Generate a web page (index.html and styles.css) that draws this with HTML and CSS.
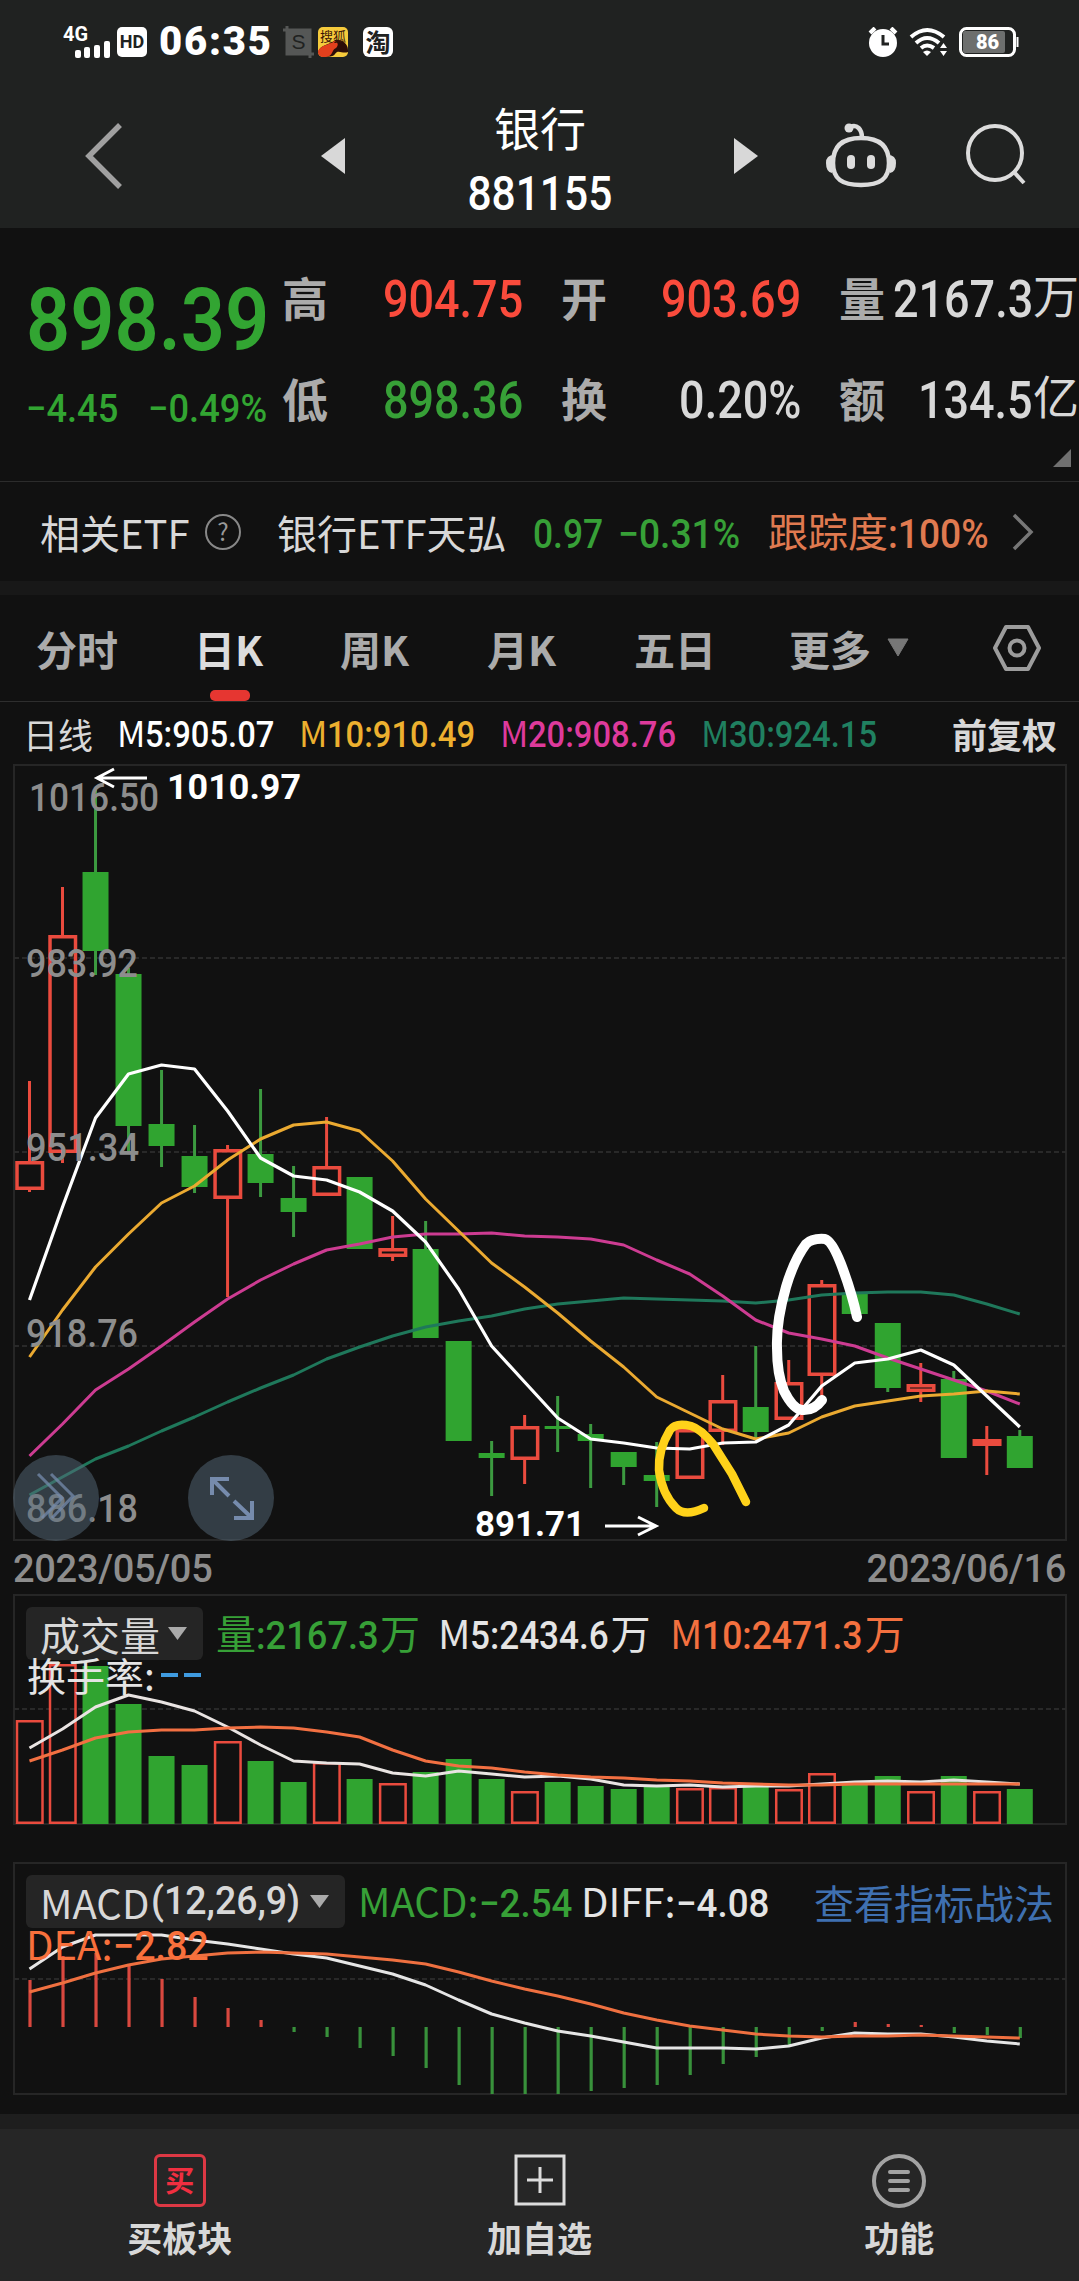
FILE: index.html
```html
<!DOCTYPE html>
<html lang="zh-CN">
<head>
  <meta charset="UTF-8" />
  <meta name="viewport" content="width=device-width, initial-scale=1.0"/>
  <title>银行 881155</title>
  <link rel="stylesheet" href="styles.css">
</head>
<body>
  <!-- Status bar -->
  <div class="status-bar">
    <svg class="signal" width="50" height="36" viewBox="0 0 50 36">
      <text x="0" y="17" class="signal-text" textLength="25" lengthAdjust="spacingAndGlyphs">4G</text>
      <g fill="#fff">
        <rect x="12" y="26" width="6" height="8" rx="2"/>
        <rect x="21" y="23" width="6" height="11" rx="2"/>
        <rect x="31" y="21" width="6" height="13" rx="2"/>
        <rect x="41" y="17" width="6" height="17" rx="2"/>
      </g>
    </svg>
    <span class="hd">HD</span>
    <span class="time">06:35</span>
    <svg class="crop-icon" width="31" height="32" viewBox="0 0 31 32">
      <path d="M4 0V28H31M0 4H27V32" fill="none" stroke="#555756" stroke-width="3"/>
      <rect x="4" y="4" width="23" height="23" fill="#555756"/>
      <text x="15.5" y="23" text-anchor="middle" class="crop-text">S</text>
    </svg>
    <svg class="sohu" width="30" height="30" viewBox="0 0 30 30">
      <rect width="30" height="30" rx="5" fill="#f6cb3c"/>
      <path d="M0 25C3 17 10 19 17 13C24 12 30 17 30 23V25C24 27 20 22 17 27C15 31 3 31 0 25Z" fill="#2c0d08"/>
      <path d="M0 24C4 17 10 19 16 14C20 15 21 18 18 21C13 23 16 30 6 30C2 30 0 28 0 24Z" fill="#e4401d"/>
      <text x="15" y="14" text-anchor="middle" class="sohu-text">搜狐</text>
    </svg>
    <span class="tao">淘</span>
    <div class="status-right">
      <svg width="30" height="30" viewBox="0 0 30 30">
        <circle cx="15" cy="16" r="14" fill="#fff"/>
        <path d="M2 6L7 1M28 6L23 1" stroke="#fff" stroke-width="4"/>
        <path d="M15 8V17H21" fill="none" stroke="#202221" stroke-width="3"/>
      </svg>
      <svg width="39" height="30" viewBox="0 0 39 30">
        <g fill="none" stroke="#fff" stroke-width="4">
          <path d="M2 10Q18 -4 35 10"/>
          <path d="M7 16Q18 6 30 16"/>
          <path d="M12 21Q18 16 25 21"/>
        </g>
        <path d="M14 25Q18 22 22 25L18 29Z" fill="#fff"/>
        <path d="M31 21L34.500 16L38 21ZM31 24L34.500 29L38 24Z" fill="#fff"/>
      </svg>
      <svg width="61" height="30" viewBox="0 0 61 30">
        <rect x="1.500" y="1.500" width="54" height="27" rx="6" fill="none" stroke="#fff" stroke-width="3"/>
        <rect x="4" y="4" width="42" height="22" rx="2" fill="#6d6f6e"/>
        <path d="M58.500 10V20" stroke="#fff" stroke-width="2"/>
        <text x="28.500" y="22" text-anchor="middle" class="battery-text">86</text>
      </svg>
    </div>
  </div>

  <!-- Title bar -->
  <div class="title-bar">
    <svg class="back" width="40" height="68" viewBox="0 0 40 68">
      <path d="M36 3L5 34L36 65" fill="none" stroke="#a0a0a0" stroke-width="5.500"/>
    </svg>
    <svg class="prev" width="25" height="38" viewBox="0 0 25 38"><path d="M0 19L24 1V37Z" fill="#d8d8d8"/></svg>
    <div class="title">
      <div class="title-name">银行</div>
      <div class="title-code num">881155</div>
    </div>
    <svg class="next" width="25" height="38" viewBox="0 0 25 38"><path d="M24 19L0 1V37Z" fill="#d8d8d8"/></svg>
    <svg class="robot" width="70" height="68" viewBox="0 0 70 68">
      <g fill="none" stroke="#dcdcdc" stroke-width="4.500">
        <path d="M35 17C52 17 63 24 63 42C63 58 54 64 35 64C16 64 7 58 7 42C7 24 18 17 35 17Z"/>
        <path d="M24 6C31 3 36 8 36 17"/>
      </g>
      <g fill="#dcdcdc">
        <circle cx="23" cy="7" r="4.500"/>
        <path d="M8 34Q0 34 0 42Q0 51 6 52ZM62 34Q70 34 70 42Q70 51 64 52Z"/>
        <rect x="21" y="34" width="8" height="14" rx="4"/>
        <rect x="41" y="34" width="8" height="14" rx="4"/>
      </g>
    </svg>
    <svg class="search" width="62" height="62" viewBox="0 0 62 62">
      <circle cx="29" cy="30" r="27" fill="none" stroke="#dcdcdc" stroke-width="4"/>
      <path d="M47 48L58 60" stroke="#dcdcdc" stroke-width="4"/>
    </svg>
  </div>

  <!-- Quote -->
  <div class="quote">
    <div class="last">
      <div class="price num">898.39</div>
      <div class="change num"><span>−4.45</span><span>−0.49%</span></div>
    </div>
    <div class="stats">
      <b>高</b><span><i class="num red">904.75</i></span>
      <b>开</b><span><i class="num red">903.69</i></span>
      <b>量</b><span class="wide"><i class="num">2167.3</i>万</span>
      <b>低</b><span><i class="num green">898.36</i></span>
      <b>换</b><span><i class="num">0.20%</i></span>
      <b>额</b><span><i class="num">134.5</i>亿</span>
    </div>
    <div class="corner"></div>
  </div>

  <!-- Related ETF -->
  <div class="etf">
    <span class="etf-label">相关ETF</span>
    <span class="help">?</span>
    <span class="etf-name">银行ETF天弘</span>
    <span class="etf-price"><i class="num">0.97</i></span>
    <span class="etf-rate"><i class="num">−0.31%</i></span>
    <span class="etf-track">跟踪度<i class="num">:100%</i></span>
    <svg width="22" height="38" viewBox="0 0 22 38"><path d="M2 2L19 19L2 36" fill="none" stroke="#777" stroke-width="3.500"/></svg>
  </div>
  <div class="divider"></div>

  <!-- Period tabs -->
  <div class="tabs">
    <span>分时</span>
    <span class="active">日K</span>
    <span>周K</span>
    <span>月K</span>
    <span>五日</span>
    <span>更多</span>
    <svg class="tab-arrow" width="24" height="20" viewBox="0 0 24 20"><path d="M2 1H22L12 18Z" fill="#777" stroke="#777" stroke-linejoin="round"/></svg>
    <svg width="50" height="48" viewBox="0 0 50 48">
      <g fill="none" stroke="#9c9c9c" stroke-width="4" stroke-linejoin="round">
        <path d="M14 3H36L47 24L36 45H14L3 24Z"/>
        <circle cx="25" cy="24" r="7.500"/>
      </g>
    </svg>
  </div>

  <!-- Moving averages -->
  <div class="ma-row">
    <span class="ma-title">日线</span>
    <span class="ma5">M<i class="num">5:905.07</i></span>
    <span class="ma10">M<i class="num">10:910.49</i></span>
    <span class="ma20">M<i class="num">20:908.76</i></span>
    <span class="ma30">M<i class="num">30:924.15</i></span>
    <b>前复权</b>
  </div>

  <svg class="kline" id="kline" viewBox="13 764 1055 777"></svg>
  <div class="dates"><span>2023/05/05</span><span>2023/06/16</span></div>

  <!-- Volume -->
  <div class="panel volume">
    <svg class="plot" id="volume" viewBox="13 1594 1055 231"></svg>
    <div class="legend">
      <span class="select vol-select">成交量 <u></u></span>
      <span class="vol-now green">量<i class="num">:2167.3</i>万</span>
      <span class="vol-m5">M<i class="num">5:2434.6</i>万</span>
      <span class="vol-m10">M<i class="num">10:2471.3</i>万</span>
    </div>
    <div class="turnover">换手率: <u></u><u></u></div>
  </div>

  <!-- MACD -->
  <div class="panel macd">
    <svg class="plot" id="macd" viewBox="13 1862 1055 233"></svg>
    <div class="legend">
      <span class="select macd-select">MACD<i class="num">(12,26,9)</i> <u></u></span>
      <span class="macd-value green">MACD:<i class="num">−2.54</i></span>
      <span class="diff-value">DIFF:<i class="num">−4.08</i></span>
      <a class="guide">查看指标战法</a>
    </div>
    <div class="dea">DEA:<i class="num">−2.82</i></div>
  </div>

  <!-- Bottom bar -->
  <div class="bottom-bar">
    <div class="action">
      <span class="buy-icon">买</span>
      买板块
    </div>
    <div class="action">
      <svg width="52" height="52" viewBox="0 0 52 52">
        <path d="M2 2H50V50H2ZM26 13V39M13 26H39" fill="none" stroke="#dcdcdc" stroke-width="3"/>
      </svg>
      加自选
    </div>
    <div class="action">
      <svg width="54" height="54" viewBox="0 0 54 54">
        <g fill="none" stroke="#a3a3a3" stroke-width="4">
          <circle cx="27" cy="27" r="25"/>
          <path d="M18 18H36M18 27H36M18 36H36" stroke-linecap="round"/>
        </g>
      </svg>
      功能
    </div>
  </div>

  <script src="chart.js"></script>
</body>
</html>
```
FILE: styles.css
```css
body {
  margin: 0;
  width: 1079px;
  height: 2281px;
  background: #111;
  color: #d8d8d8;
  font-family: "Noto Sans CJK SC", sans-serif;
  font-size: 40px;
  line-height: 1;
  overflow: hidden;
  display: flex;
  flex-direction: column;
}

svg {
  display: block;
  flex: none;
}

i, u {
  font-style: normal;
  text-decoration: none;
}

span, b, a {
  white-space: nowrap;
}

/* condensed figures */
.num {
  display: inline-block;
  font-family: Roboto, "Noto Sans CJK SC", sans-serif;
  font-weight: 500;
  transform: scaleX(0.885);
  transform-origin: left center;
}

.red { color: #fa4b3c; }
.green { color: #37a037; }

/* Status bar */
.status-bar {
  height: 84px;
  flex: none;
  box-sizing: border-box;
  padding: 0 59px 0 63px;
  display: flex;
  align-items: center;
  background: #202221;
}

.signal { overflow: visible; }

.signal-text {
  font: bold 21px Roboto, sans-serif;
  fill: #fff;
}

.hd {
  width: 30px;
  height: 30px;
  margin-left: 4px;
  border-radius: 5px;
  background: #fff;
  color: #202221;
  font: bold 18px/30px Roboto, sans-serif;
  text-align: center;
}

.time {
  width: 124px;
  margin-left: 12px;
  color: #fff;
  font: 900 40px/40px Roboto, sans-serif;
  letter-spacing: 1.8px;
}

.crop-icon { margin-right: 4px; }
.crop-text { font: 21px "Liberation Sans", sans-serif; fill: #202221; }
.sohu { overflow: visible; }
.sohu-text { font: 13px "Noto Sans CJK SC", sans-serif; fill: #3a1608; }

.tao {
  width: 30px;
  height: 30px;
  margin-left: 15px;
  border-radius: 6px;
  background: #fff;
  color: #202221;
  font-size: 25px;
  font-weight: 700;
  line-height: 29px;
  text-align: center;
}

.status-right {
  display: flex;
  gap: 11px;
  margin-left: auto;
}

.battery-text {
  font: 900 20px Roboto, sans-serif;
  fill: #fff;
}

/* Title bar */
.title-bar {
  height: 144px;
  flex: none;
  display: flex;
  padding-left: 84px;
  background: #202221;
}

.back { margin-top: 38px; }
.prev { margin: 53px 0 0 197px; }

.title {
  width: 388px;
  color: #fff;
  text-align: center;
}

.title-name {
  margin-top: 19px;
  font-size: 46px;
}

.title .title-code {
  margin-top: 21px;
  font-size: 48px;
  transform-origin: center;
}

.next { margin-top: 53px; }
.robot { margin: 37px 0 0 67px; }
.search { margin: 39px 0 0 70px; }

/* Quote */
.quote {
  position: relative;
  height: 254px;
  flex: none;
  display: flex;
  border-bottom: 1px solid #2c2c2c;
  box-sizing: border-box;
}

.last {
  width: 282px;
  padding-left: 26px;
  box-sizing: border-box;
  color: #32a532;
}

.price {
  height: 90px;
  margin-top: 45px;
  font-size: 88px;
  font-weight: 600;
  line-height: 94px;
  transform: scaleX(0.88);
}

.change {
  display: flex;
  gap: 32px;
  margin-top: 27px;
  font-size: 39px;
  transform: scaleX(0.93);
}

.stats {
  display: grid;
  grid-template-columns: 47px 194px 84px 194px 84px 194px;
  grid-template-rows: 101px 101px;
  align-items: center;
  margin-top: 17px;
  font-size: 46px;
}

.stats b { color: #ababab; }
.stats > span { text-align: right; }
.stats b:nth-of-type(3n + 2), .stats b:nth-of-type(3n) { text-align: right; }

.stats .num {
  font-size: 52px;
  transform: translateY(4px) scaleX(0.865);
  transform-origin: right center;
}

.stats .wide { margin-left: -24px; }

.corner {
  position: absolute;
  right: 8px;
  bottom: 14px;
  width: 18px;
  height: 18px;
  background: #707070;
  clip-path: polygon(100% 0, 100% 100%, 0 100%);
}

/* Related ETF */
.etf {
  height: 99px;
  flex: none;
  display: flex;
  align-items: center;
  padding-left: 40px;
}

.etf-label { width: 165px; }

.help {
  width: 32px;
  height: 32px;
  border: 2px solid #888;
  border-radius: 50%;
  color: #999;
  font-size: 24px;
  line-height: 30px;
  text-align: center;
}

.etf-name { width: 256px; margin-left: 36px; }
.etf-price { width: 85px; color: #37a037; }
.etf-rate { width: 150px; color: #37a037; }
.etf-track { width: 244px; color: #e07a50; }
.etf .num { transform: translateY(1px) scaleX(0.93); }
.etf .etf-price .num { transform: translateY(1px) scaleX(0.885); }

.divider {
  height: 14px;
  flex: none;
  background: #181818;
}

/* Period tabs */
.tabs {
  height: 107px;
  flex: none;
  box-sizing: border-box;
  display: flex;
  align-items: center;
  border-bottom: 1px solid #2e2e2e;
  padding-left: 36px;
  color: #ababab;
  font-size: 41px;
  font-weight: 700;
}

.tabs span { width: 147px; }
.tabs span:first-child { width: 158px; }
.tabs span:nth-child(2) { width: 146px; }
.tabs span:nth-child(5) { width: 155px; }
.tabs span:nth-child(6) { width: 97px; }

.tabs .active {
  position: relative;
  color: #dcdcdc;
}

.tabs .active::after {
  content: "";
  position: absolute;
  left: 16px;
  top: 62px;
  width: 40px;
  height: 11px;
  border-radius: 5px;
  background: #e63631;
}

.tab-arrow { margin-right: 82px; }

/* Moving averages */
.ma-row {
  height: 62px;
  flex: none;
  display: flex;
  align-items: center;
  padding-left: 23px;
  font-size: 35px;
}

.ma-row .num { font-size: 37px; }
.ma-title { width: 94px; }
.ma5 { width: 182px; color: #fff; }
.ma10 { width: 201px; color: #edb02f; }
.ma20 { width: 201px; color: #de3a9b; }
.ma30 { width: 251px; color: #208060; }

.kline {
  width: 1055px;
  height: 777px;
  margin-left: 13px;
}

.axis {
  font: 500 38px Roboto, sans-serif;
  fill: #8d8d8d;
}

.mark {
  font: 700 35px Roboto, sans-serif;
  fill: #fff;
}

.dates {
  height: 53px;
  flex: none;
  display: flex;
  justify-content: space-between;
  padding: 0 13px;
  color: #8d8d8d;
  font: 500 38px/56px Roboto, sans-serif;
  letter-spacing: -0.3px;
}

/* Indicator panels */
.panel {
  position: relative;
  width: 1055px;
  margin-left: 13px;
  flex: none;
}

.volume { height: 231px; }
.macd { height: 233px; margin-top: 37px; }

.plot {
  position: absolute;
  inset: 0;
  width: 100%;
  height: 100%;
}

.legend {
  position: relative;
  display: flex;
  align-items: center;
  padding: 13px 0 0 13px;
}

.legend .num { font-size: 39px; }

.select {
  height: 53px;
  box-sizing: border-box;
  display: flex;
  align-items: center;
  padding: 0 16px 0 14px;
  border-radius: 6px;
  background: #252525;
}

.select u {
  width: 19px;
  height: 13px;
  margin-left: auto;
  background: #aaa;
  clip-path: polygon(0 0, 100% 0, 50% 100%);
}

.vol-select { width: 177px; margin-right: 13px; }
.vol-now { width: 222px; }
.vol-m5 { width: 232px; color: #e4e4e4; }
.vol-m10 { color: #f3703f; }

/* closes the gap the condensed figures leave before the unit */
.vol-now .num { margin-right: -8px; transform: scaleX(0.93); }
.vol-m5 .num { margin-right: -14px; transform: scaleX(0.9); }
.vol-m10 .num { margin-right: -14px; transform: scaleX(0.91); }

.turnover {
  position: relative;
  display: flex;
  align-items: center;
  gap: 6px;
  padding-left: 14px;
  margin-top: -5px;
  color: #e4e4e4;
  font-size: 39px;
}

.turnover u {
  width: 17px;
  height: 4px;
  background: #3f9be0;
}

.macd-select { width: 319px; margin-right: 13px; }
.macd-value { width: 223px; }
.diff-value { width: 233px; color: #e4e4e4; }
.guide { color: #3f70b0; }

.macd-select .num {
  margin-left: 2px;
  transform: scaleX(0.96);
}

.macd-value .num, .diff-value .num, .dea .num { transform: scaleX(0.94); }

.dea {
  position: relative;
  margin-top: -5px;
  padding-left: 13px;
  color: #f8703c;
}

/* Bottom bar */
.bottom-bar {
  display: flex;
  height: 152px;
  flex: none;
  justify-content: space-around;
  margin-top: 19px;
  border-top: 15px solid #1e1e1e;
  background: #262626;
}

.action {
  width: 360px;
  display: flex;
  flex-direction: column;
  align-items: center;
  justify-content: space-between;
  height: 100px;
  padding-top: 25px;
  font-size: 35px;
  font-weight: 700;
}

.buy-icon {
  width: 52px;
  height: 53px;
  box-sizing: border-box;
  border: 3px solid #dd3844;
  border-radius: 6px;
  color: #f02f40;
  font-size: 29px;
  line-height: 45px;
  text-align: center;
}
```
FILE: chart.js
```js
const RED = "#ea4b3e";
const GREEN = "#30a430";
const STEP = 33.01;
const X0 = 29.5;

// [up, high, top, bottom, low]
const candles = [
  [1, 1081, 1161, 1190, 1192], [1, 887, 935, 1153, 1163], [0, 790, 872, 951, 975],
  [0, 968, 974, 1126, 1152], [0, 1070, 1124, 1146, 1167], [0, 1125, 1156, 1187, 1193],
  [1, 1145, 1149, 1199, 1297], [0, 1089, 1154, 1183, 1197], [0, 1166, 1198, 1212, 1237],
  [1, 1117, 1166, 1196, 1196], [0, 1177, 1177, 1249, 1249], [1, 1216, 1248, 1257, 1261],
  [0, 1221, 1249, 1338, 1338], [0, 1341, 1341, 1441, 1441], [0, 1441, 1453, 1458, 1496],
  [1, 1415, 1426, 1460, 1484], [0, 1396, 1426, 1429, 1452], [0, 1424, 1434, 1441, 1488],
  [0, 1452, 1452, 1467, 1485], [0, 1442, 1475, 1481, 1507], [1, 1429, 1429, 1479, 1479],
  [1, 1375, 1400, 1432, 1445], [0, 1346, 1407, 1432, 1439], [1, 1360, 1382, 1420, 1420],
  [1, 1280, 1284, 1376, 1398], [0, 1294, 1294, 1314, 1314], [0, 1323, 1323, 1388, 1392],
  [1, 1363, 1384, 1392, 1402], [0, 1371, 1379, 1458, 1458], [1, 1426, 1439, 1446, 1475],
  [0, 1430, 1436, 1468, 1468]
];

const ma5 = [1300, 1207, 1118, 1074, 1065, 1069, 1111, 1158, 1176, 1180, 1192, 1211, 1242, 1289, 1346, 1382,
  1418, 1439, 1443, 1448, 1449, 1443, 1442, 1425, 1386, 1363, 1359, 1350, 1365, 1396, 1427];
const ma10 = [1357, 1310, 1267, 1234, 1203, 1186, 1160, 1139, 1125, 1122, 1131, 1161, 1199, 1231, 1263, 1287,
  1313, 1341, 1367, 1397, 1413, 1429, 1439, 1433, 1417, 1406, 1401, 1396, 1394, 1391, 1394];
const ma20 = [1456, 1424, 1390, 1369, 1346, 1322, 1299, 1280, 1264, 1250, 1244, 1237, 1234, 1234, 1233, 1236,
  1237, 1239, 1245, 1260, 1274, 1296, 1320, 1333, 1339, 1346, 1358, 1369, 1380, 1391, 1404];
const ma30 = [1495, 1477, 1459, 1446, 1431, 1417, 1402, 1388, 1375, 1359, 1347, 1336, 1327, 1321, 1316, 1309,
  1304, 1301, 1298, 1299, 1300, 1301, 1303, 1300, 1295, 1293, 1292, 1292, 1295, 1304, 1314];

const volumes = [1720, 1664, 1666, 1704, 1756, 1765, 1741, 1761, 1782, 1762, 1779, 1783, 1772, 1759, 1779, 1791,
  1782, 1786, 1789, 1787, 1788, 1787, 1786, 1789, 1773, 1785, 1776, 1791, 1776, 1791, 1789];
const vol5 = [1748, 1729, 1707, 1695, 1702, 1711, 1727, 1745, 1761, 1763, 1764, 1773, 1776, 1771, 1774, 1777,
  1776, 1779, 1785, 1786, 1785, 1787, 1786, 1786, 1784, 1782, 1781, 1782, 1780, 1782, 1784];
const vol10 = [1761, 1750, 1738, 1732, 1730, 1730, 1728, 1727, 1728, 1732, 1737, 1750, 1761, 1766, 1768, 1772,
  1775, 1777, 1778, 1780, 1781, 1783, 1784, 1785, 1785, 1784, 1784, 1784, 1784, 1784, 1784];

const ZERO = 2027;
const macd = [1980, 1956, 1953, 1964, 1979, 1997, 2008, 2020, 2032, 2037, 2048, 2056, 2068, 2085, 2094, 2094,
  2094, 2091, 2088, 2085, 2075, 2064, 2057, 2045, 2031, 2022, 2024, 2025, 2033, 2035, 2038];
const diff = [1969, 1947, 1935, 1935, 1935, 1940, 1944, 1949, 1954, 1958, 1966, 1974, 1985, 2000, 2014, 2023,
  2031, 2036, 2042, 2048, 2048, 2048, 2049, 2046, 2038, 2033, 2034, 2034, 2037, 2041, 2044];
const dea = [1992, 1983, 1973, 1965, 1959, 1956, 1953, 1952, 1953, 1954, 1957, 1960, 1964, 1972, 1981, 1989,
  1996, 2004, 2013, 2020, 2026, 2030, 2034, 2036, 2037, 2036, 2036, 2035, 2036, 2037, 2038];

const x = i => X0 + i * STEP;

function line(values, color, width = 3) {
  const points = values.map((y, i) => `${x(i).toFixed(1)},${y}`).join(" ");
  return `<polyline points="${points}" fill="none" stroke="${color}" stroke-width="${width}" stroke-linejoin="round"/>`;
}

function frame(top, bottom, grid) {
  let out = `<rect x="14" y="${top}" width="1052" height="${bottom - top}" fill="none" stroke="#262626" stroke-width="2"/>`;
  grid.forEach(y => {
    out += `<path d="M14 ${y}H1066" stroke="#292929" stroke-width="2" stroke-dasharray="5 3"/>`;
  });
  return out;
}

function box(i, up, top, bottom, stroke) {
  if (up) {
    const h = Math.max(bottom - top - stroke, 1);
    return `<rect x="${x(i) - 12.5}" y="${top + stroke / 2}" width="25.5" height="${h}" fill="none" stroke="${RED}" stroke-width="${stroke}"/>`;
  }
  return `<rect x="${x(i) - 13}" y="${top}" width="26" height="${bottom - top}" fill="${GREEN}"/>`;
}

function label(text, left, base, width, cls) {
  return `<text x="${left}" y="${base}" class="${cls}" textLength="${width}" lengthAdjust="spacingAndGlyphs">${text}</text>`;
}

function drawKline() {
  let out = frame(765, 1540, [958, 1152, 1346]);
  candles.forEach(([up, high, top, bottom, low], i) => {
    const color = up ? RED : "#3c9a40";
    out += `<path d="M${x(i)} ${high}V${top}M${x(i)} ${bottom}V${low}" stroke="${color}" stroke-width="3"/>`;
    out += box(i, up, top, bottom, 3.5);
  });
  out += line(ma30, "#1f785b") + line(ma20, "#cd3c92") + line(ma10, "#ebaa31") + line(ma5, "#fff", 3.2);

  out += label("1016.50", 29, 811, 130, "axis");
  out += label("983.92", 26, 977, 112, "axis");
  out += label("951.34", 26, 1161, 113, "axis");
  out += label("918.76", 26, 1347, 112, "axis");
  out += label("886.18", 26, 1522, 112, "axis");

  out += label("1010.97", 167, 799, 134, "mark");
  out += label("891.71", 475, 1536, 110, "mark");
  out += `<path d="M147 778H97M114 769L97 778L114 787M605 1526H656M638 1517L656 1526L638 1535" fill="none" stroke="#fff" stroke-width="3"/>`;

  // hand-drawn marks
  out += `<g fill="none" stroke-width="10" stroke-linecap="round" stroke-linejoin="round">
    <path d="M857 1317Q852 1293 841 1264Q832 1241 825 1239Q812 1238 806 1244Q794 1260 786 1287Q776 1322 777 1348Q777 1374 784 1391Q793 1409 802 1410Q814 1411 822 1400" stroke="#fff"/>
    <path d="M746 1502L732 1474L713 1444Q701 1429 691 1426Q676 1422 670 1430Q658 1450 659 1470Q662 1494 676 1508Q685 1517 704 1508" stroke="#ffd21a" stroke-width="8.500"/>
  </g>`;

  // floating buttons
  out += `<circle cx="56" cy="1498" r="43" fill="#566a7a" fill-opacity=".5"/>
    <circle cx="231" cy="1498" r="43" fill="#566a7a" fill-opacity=".5"/>
    <g fill="none" stroke="#768bac" stroke-width="3">
      <path d="M38 1474L62 1498L42 1518M51 1474L73 1496L52 1518" stroke-opacity=".75"/>
      <path d="M212 1495V1479H229M212 1479L229 1496M252 1501V1518H234M252 1518L234 1501" stroke-width="4"/>
    </g>`;
  document.getElementById("kline").innerHTML = out;
}

function drawVolume() {
  let out = frame(1595, 1824, [1709]);
  volumes.forEach((top, i) => {
    out += box(i, candles[i][0], top, 1824, 2.5);
  });
  out += line(vol5, "#e9e4e2") + line(vol10, "#f27042");
  document.getElementById("volume").innerHTML = out;
}

function drawMacd() {
  let out = frame(1863, 2094, [1979]);
  macd.forEach((y, i) => {
    out += `<path d="M${x(i) + 0.5} ${ZERO}V${y}" stroke="${y < ZERO ? "#d9483f" : "#38913b"}" stroke-width="3.2"/>`;
  });
  out += line(diff, "#e6e6e6") + line(dea, "#ef7040");
  document.getElementById("macd").innerHTML = out;
}

drawKline();
drawVolume();
drawMacd();
```
